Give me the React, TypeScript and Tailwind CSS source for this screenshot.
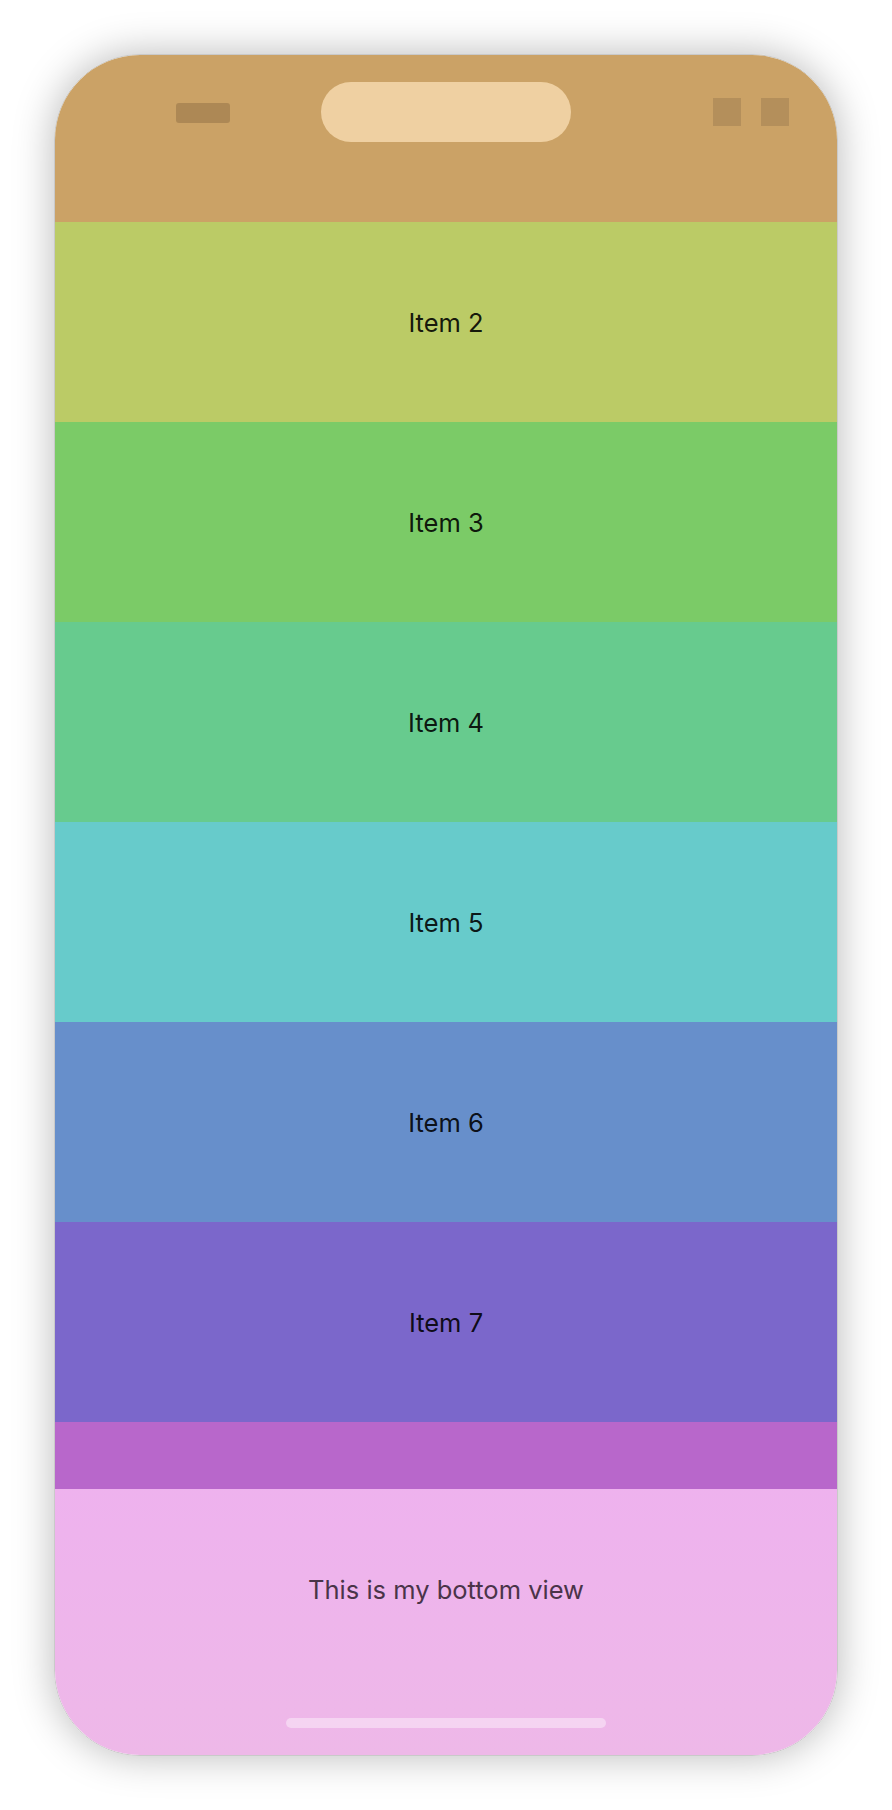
const items = [
  { label: 'Item 2', color: 'bg-[#bbcb66]' },
  { label: 'Item 3', color: 'bg-[#7bcb67]' },
  { label: 'Item 4', color: 'bg-[#67cb8e]' },
  { label: 'Item 5', color: 'bg-[#67cbcb]' },
  { label: 'Item 6', color: 'bg-[#678fcb]' },
  { label: 'Item 7', color: 'bg-[#7b67cb]' },
  // Item 8 sits mostly under the bottom view, its label is never visible
  { label: '', color: 'bg-[#b867cb]' },
]

function StatusBar() {
  return (
    <div className="relative h-[167px] shrink-0 bg-[#cba266]">
      <div className="absolute top-[48px] left-[121px] h-[20px] w-[54px] rounded-[3px] bg-[#ad8855]" />
      <div className="absolute top-[27px] left-[266px] h-[60px] w-[250px] rounded-full bg-[#efd0a2]" />
      <div className="absolute top-[43px] right-[48px] flex gap-[20px]">
        <div className="h-[28px] w-[28px] bg-[#b48f5b]" />
        <div className="h-[28px] w-[28px] bg-[#b48f5b]" />
      </div>
    </div>
  )
}

function ListItem({ label, color }: { label: string; color: string }) {
  return (
    <div
      className={`flex h-[200px] shrink-0 items-center justify-center pt-[2px] ${color}`}
    >
      {label && <span className="text-[25.5px] text-black/90">{label}</span>}
    </div>
  )
}

export default function App() {
  return (
    <div
      className="h-[1810px] w-[892px] bg-white pt-[54px] pl-[54px]"
      style={{ fontFamily: 'Inter, "Noto Sans", sans-serif' }}
    >
      <div className="flex h-[1702px] w-[784px] flex-col overflow-hidden rounded-[86px] border border-[#c9c9c9] shadow-[0_0_40px_rgba(0,0,0,0.28)]">
        <StatusBar />
        <div className="flex min-h-0 flex-1 flex-col overflow-hidden">
          {items.map((item, index) => (
            <ListItem key={index} label={item.label} color={item.color} />
          ))}
        </div>
        <div className="flex h-[266px] shrink-0 flex-col items-center bg-gradient-to-b from-[#eeb2ee] to-[#eeb8e8]">
          <div className="flex h-[200px] items-center justify-center pt-[2px]">
            <span className="text-[25.5px] text-[#4a3449]">
              This is my bottom view
            </span>
          </div>
          <div className="mt-[29px] h-[10px] w-[320px] rounded-full bg-white/40" />
        </div>
      </div>
    </div>
  )
}
